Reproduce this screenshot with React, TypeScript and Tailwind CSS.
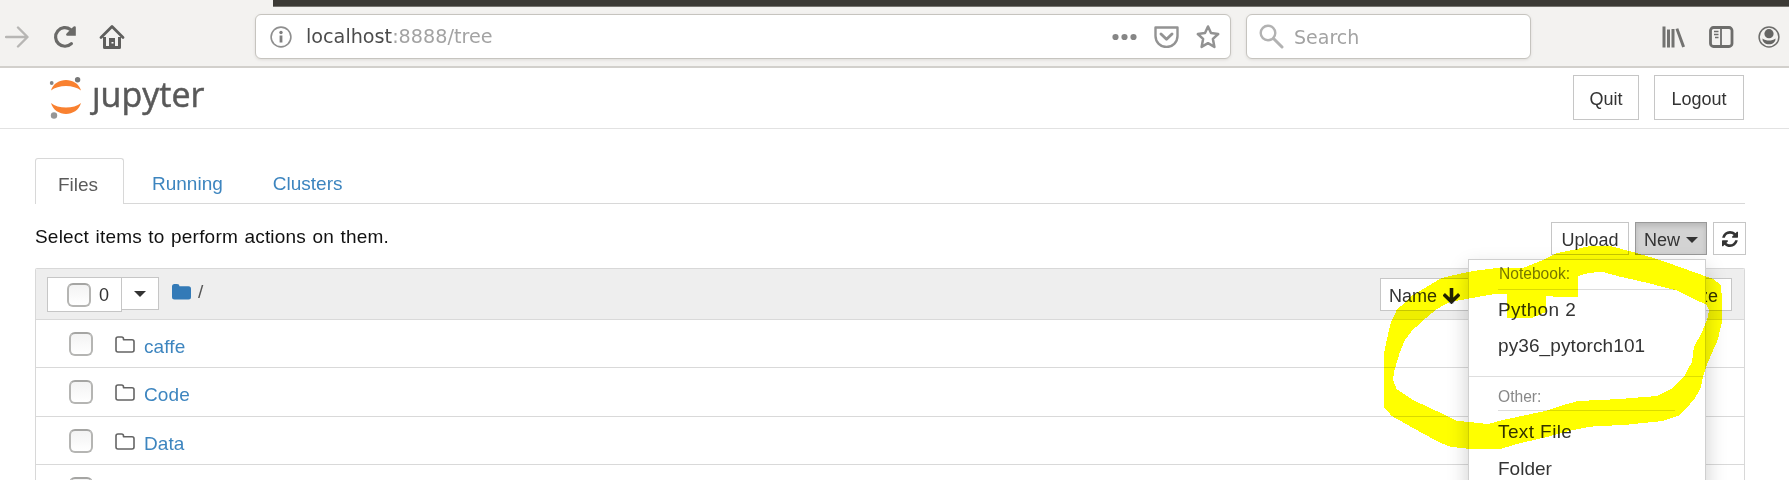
import type { ReactNode } from "react";

const OUTER =
  "M1384 408V353L1386.7 340L1390.7 323L1396.7 310L1413 295L1430 285L1440 279L1446.7 276.7L1473 271L1497 268H1523L1543 260L1557 253L1577 249L1590 246H1610L1633 252L1660 260L1690 270.7L1713 279L1721 285L1722 300V322L1717.7 340L1706.7 365L1702.7 378L1700.7 388L1695 398L1686.7 408L1680 415L1663 421L1626.7 424.7L1590 426.7L1573 430L1546.7 437L1516.7 444L1501.7 448.7H1468L1450 446.7L1438 441.7L1416.7 430L1391.7 416L1385 408Z";
const INNER =
  "M1393 380L1394 371.7L1400 351.7L1405 340L1411.7 331L1421.7 321.7L1436.7 309L1450 302L1466.7 299L1483 296L1495 294H1507V317.5H1533L1546 312V296L1560 297H1578V276L1590 272.7L1603 272L1620 276.7L1646.7 282.7L1676.7 290.5L1706.7 305L1709 310L1708 316.7L1701.7 333L1694 346.7L1692 361.7L1685 375L1673 388L1656.7 396L1620 399L1578 401L1560 406L1546.7 410.7L1503 420L1488 424L1456.7 420.7L1438 411.7L1413 400L1396.7 389Z";

function Checkbox() {
  return (
    <span className="block size-6 shrink-0 rounded-[6px] border-2 border-[#b5b5b3] border-t-[#a5a5a3] bg-gradient-to-b from-[#f3f3f3] to-white" />
  );
}

function Caret() {
  return (
    <svg width="12" height="6" viewBox="0 0 12 6" className="shrink-0">
      <path d="M0 0h12L6 6z" fill="#333" />
    </svg>
  );
}

function Button({ className, children }: { className: string; children: ReactNode }) {
  return (
    <div className={`flex shrink-0 items-center border border-[#c6c6c6] bg-white text-[18px] leading-none text-[#333] ${className}`}>
      {children}
    </div>
  );
}

function Toolbar() {
  return (
    <div className="flex h-[68px] flex-col border-b-2 border-[#d2d0cc] bg-[#f3f2f0]">
      <div className="ml-[273px] h-[7px] shrink-0 border-b border-[#76746f] bg-[#3c3a35]" />
      <div className="flex h-[59px] items-center font-['DejaVu_Sans',sans-serif]">
        <svg width="24" height="24" viewBox="0 0 24 24" className="ml-[5px] shrink-0" fill="none" stroke="#b7b6b4" strokeWidth="2.4" strokeLinecap="round" strokeLinejoin="round">
          <path d="M1 12h21M13 2.500l9.500 9.500-9.500 9.500" />
        </svg>
        <svg width="24" height="24" viewBox="0 0 24 24" className="ml-[24px] shrink-0">
          <path d="M17.500 4.500A9.300 9.300 0 1 0 18.400 18.600" fill="none" stroke="#6a6a68" strokeWidth="3.200" strokeLinecap="round" />
          <path d="M20.300 1.700c1-.9 2.500-.6 2.500.7v8.300H14.400c-1.400 0-1.700-1.400-.8-2.300z" fill="#6a6a68" />
        </svg>
        <svg width="26" height="26" viewBox="0 0 26 26" className="ml-[22px] shrink-0">
          <path d="M2 13.500L13 2.500l11 11" fill="none" stroke="#5f5f5d" strokeWidth="2.800" strokeLinecap="round" strokeLinejoin="round" />
          <path d="M5.500 13v10.500h15V13" fill="none" stroke="#5f5f5d" strokeWidth="3" strokeLinejoin="round" />
          <path d="M10 14h6v10h-6z" fill="#5f5f5d" />
          <path d="M12.500 18h2v1.500h-2z" fill="#fff" />
        </svg>
        <div className="ml-[130px] flex h-[45px] w-[976px] shrink-0 items-center rounded-[6px] border border-[#c6c4bf] bg-white shadow-[0_1px_3px_#dddbd8]">
          <svg width="22" height="22" viewBox="0 0 22 22" className="ml-[14px] shrink-0">
            <circle cx="11" cy="11" r="9.900" fill="none" stroke="#8f8f8f" strokeWidth="1.600" />
            <circle cx="11" cy="6.500" r="1.700" fill="#7f7f7f" />
            <path d="M9.600 9.500h2.800v7H9.600z" fill="#7f7f7f" />
          </svg>
          <div className="ml-[14px] grow whitespace-nowrap text-[19.2px] leading-6 text-[#a3a3a3]">
            <span className="text-[#4c4c4c]">localhost</span>:8888/tree
          </div>
          <svg width="25" height="8" viewBox="0 0 25 8" className="shrink-0" fill="#868686">
            <circle cx="3.500" cy="4" r="3.100" />
            <circle cx="12.500" cy="4" r="3.100" />
            <circle cx="21.500" cy="4" r="3.100" />
          </svg>
          <svg width="25" height="22" viewBox="0 0 25 22" className="ml-[17px] shrink-0" fill="none" stroke="#939393" strokeLinecap="round" strokeLinejoin="round">
            <path d="M1.500 1.500h22v8.500a11 11 0 0 1-22 0z" strokeWidth="2.400" />
            <path d="M7 8l5.500 5.200L18 8" strokeWidth="2.900" />
          </svg>
          <svg width="24" height="25" viewBox="0 0 24 25" className="mr-[10px] ml-[17px] shrink-0" fill="none" stroke="#929292" strokeWidth="2.500" strokeLinejoin="round">
            <path d="M12 2.500l3 6.600 7.200.9-5.300 4.900 1.500 8L12 19.200l-6.400 3.700 1.500-8L1.800 10l7.200-.9z" />
          </svg>
        </div>
        <div className="ml-[15px] flex h-[45px] w-[285px] shrink-0 items-center rounded-[6px] border border-[#c6c4bf] bg-white shadow-[0_1px_3px_#dddbd8]">
          <svg width="25" height="25" viewBox="0 0 25 25" className="ml-3 shrink-0" fill="none" stroke="#b2b2b2" strokeLinecap="round">
            <circle cx="9" cy="9" r="7.300" strokeWidth="2.400" />
            <path d="M14.500 14.500l8.500 8.500" strokeWidth="3" />
          </svg>
          <div className="ml-[10px] text-[19px] leading-6 text-[#a3a3a3]">Search</div>
        </div>
        <svg width="24" height="22" viewBox="0 0 24 22" className="ml-[131px] shrink-0" fill="#737371">
          <path d="M0.500 0.500h3v21h-3zM5 3.500h3v18H5zM9.500 3h3v18.500h-3zM13.500 3l2.800-.8 6.700 18.300-2.800 1z" />
        </svg>
        <svg width="25" height="22" viewBox="0 0 25 22" className="ml-[23px] shrink-0" fill="none" stroke="#6d6d6b">
          <rect x="1.500" y="1.500" width="21.500" height="19" rx="3" strokeWidth="2.800" />
          <path d="M12 1v20" strokeWidth="1.800" />
          <path d="M5 5.500h4.500M5 8.500h4.500M6 11.500h3.500" strokeWidth="1.300" />
        </svg>
        <svg width="22" height="22" viewBox="0 0 22 22" className="ml-6 shrink-0">
          <circle cx="11" cy="11" r="9.900" fill="none" stroke="#6d6d6b" strokeWidth="1.500" />
          <circle cx="11" cy="7.700" r="4.600" fill="#666664" />
          <path d="M4.500 12.500c2 1.500 4 2 6.500 2s4.500-.5 6.500-2c.3 3.500-3 5.800-6.500 5.800s-6.800-2.300-6.500-5.800z" fill="#666664" />
        </svg>
      </div>
    </div>
  );
}

function Header() {
  return (
    <div className="flex h-[61px] items-start border-b border-[#e2e2e2] pr-[45px]">
      <svg width="34" height="44" viewBox="0 0 34 44" className="mt-[8px] ml-[48px] shrink-0">
        <path d="M3 14.500C7 .5 29 .5 33 14.500C26 8.500 10 8.500 3 14.500z" fill="#f98130" />
        <path d="M3 27C7 41.500 29 41.500 33 27C26 33 10 33 3 27z" fill="#f98130" />
        <circle cx="3.700" cy="7" r="1.900" fill="#858585" />
        <circle cx="29.600" cy="3.800" r="2.700" fill="#777" />
        <circle cx="6" cy="39.500" r="3.200" fill="#969696" />
      </svg>
      <div className="mt-[4px] ml-[10px] grow font-['Open_Sans','Noto_Sans',sans-serif] text-[34px] leading-[44px] text-[#595959] [-webkit-text-stroke:0.5px_#595959]">ȷupyter</div>
      <Button className="mt-[7px] h-[45px] w-[66px] justify-center pt-[3px]">Quit</Button>
      <Button className="mt-[7px] ml-[15px] h-[45px] w-[90px] justify-center pt-[3px]">Logout</Button>
    </div>
  );
}

function Tabs() {
  return (
    <div className="mr-[44px] ml-[35px] mt-[29px] flex h-[46px] items-stretch text-[19px] text-[#3d85bf]">
      <div className="flex w-[89px] items-center rounded-t-[3px] border border-b-0 border-[#d8d8d8] pt-[8px] pl-[22px] text-[#5a5a5a]">Files</div>
      <div className="flex grow items-center gap-[50px] border-b border-[#d8d8d8] pt-[8px] pl-[28px]">
        <span>Running</span>
        <span>Clusters</span>
      </div>
    </div>
  );
}

function ActionRow() {
  return (
    <div className="mt-[18px] mr-[43px] ml-[35px] flex h-[46px] items-start">
      <div className="mt-[3px] grow text-[19px] leading-[24px] tracking-[0.2px] text-[#111] [word-spacing:1px]">Select items to perform actions on them.</div>
      <Button className="h-[33px] w-[78px] justify-center pt-[2px]">Upload</Button>
      <Button className="ml-[6px] h-[33px] w-[72px] justify-center gap-[6px] border-[#999]! bg-[#d3d3d3]! pt-[2px] shadow-[inset_0_3px_5px_rgba(0,0,0,0.13)]">
        New <Caret />
      </Button>
      <Button className="ml-[6px] h-[33px] w-[33px] justify-center pt-px">
        <svg width="16" height="16" viewBox="0 0 1536 1536">
          <path fill="#333" d="M1511 928q0 5-1 7-64 268-268 434.500T764 1536q-146 0-282.500-55T238 1324l-129 129q-19 19-45 19t-45-19-19-45V960q0-26 19-45t45-19h448q26 0 45 19t19 45-19 45l-137 137q71 66 161 102t187 36q134 0 250-65t186-179q11-17 53-117 8-23 30-23h192q13 0 22.500 9.500t9.500 22.500zm25-800v448q0 26-19 45t-45 19h-448q-26 0-45-19t-19-45 19-45l138-138Q969 256 768 256q-134 0-250 65T332 500q-11 17-53 117-8 23-30 23H50q-13 0-22.500-9.500T18 608v-7q65-268 270-434.500T768 0q146 0 284 55.500T1297 212l130-129q19-19 45-19t45 19 19 45z" />
        </svg>
      </Button>
    </div>
  );
}

function FileRow({ name, height }: { name: string; height: string }) {
  return (
    <div className={`flex shrink-0 items-start border-b border-[#d9d9d9] pt-[12px] pl-[33px] ${height}`}>
      <Checkbox />
      <svg width="20" height="17" viewBox="0 0 20 17" className="mt-[4px] ml-[22px] shrink-0" fill="none" stroke="#646464" strokeWidth="1.600" strokeLinejoin="round">
        <path d="M1 3Q1 1 3 1H6.500Q8.500 1 8.500 3V3.800H17Q19 3.800 19 5.800V14Q19 16 17 16H3Q1 16 1 14z" />
      </svg>
      <span className="mt-[3px] ml-[9px] text-[19px] leading-[24px] tracking-[0.1px] text-[#3d85bf]">{name}</span>
    </div>
  );
}

function FileTable() {
  return (
    <div className="mr-[44px] ml-[35px] flex h-[240px] flex-col overflow-hidden rounded-t-[2px] border border-b-0 border-[#d8d8d8]">
      <div className="flex h-[51px] shrink-0 items-start border-b border-[#d9d9d9] bg-[#eeeeee] pt-[8px] pr-[12px] pl-[11px]">
        <Button className="h-[35px] w-[75px] pl-[19px]">
          <Checkbox />
          <span className="ml-[8px]">0</span>
        </Button>
        <Button className="-ml-px h-[33px] w-[38px] justify-center">
          <Caret />
        </Button>
        <svg width="19" height="16" viewBox="0 0 19 16" className="mt-[7px] ml-[13px] shrink-0">
          <path d="M0 2.500Q0 0 2.500 0H5Q7.500 0 7.500 2.200H16.500Q19 2.200 19 4.700V13Q19 15.500 16.500 15.500H2.500Q0 15.500 0 13z" fill="#337ab7" />
        </svg>
        <span className="mt-[3px] ml-[7px] grow text-[19px] leading-6 text-[#555]">/</span>
        <Button className="mt-px h-[33px] w-[92px] gap-[6px] pt-[2px] pl-[8px]">
          Name
          <svg width="17" height="16" viewBox="0 0 17 16">
            <path d="M8.500 1.500v12M2 7.500l6.500 6.300 6.500-6.300" fill="none" stroke="#222" strokeWidth="3.600" strokeLinecap="square" />
          </svg>
        </Button>
        <Button className="mt-px ml-[170px] h-[33px] w-[90px] justify-end pt-[2px] pr-[13px]">File size</Button>
      </div>
      <FileRow name="caffe" height="h-[48px]" />
      <FileRow name="Code" height="h-[49px]" />
      <FileRow name="Data" height="h-[48px]" />
      <FileRow name="" height="h-[48px]" />
    </div>
  );
}

function NewMenu() {
  return (
    <div className="absolute top-[259px] left-[1468px] flex h-[260px] w-[238px] flex-col border border-[#cfcfcf] bg-white pt-[8px] text-[19px] leading-[36px] text-[#333] shadow-[0_9px_20px_rgba(0,0,0,0.2)]">
      <div className="mr-[30px] ml-[29px] h-[22px] border-b border-[#dcdcdc] pl-px text-[15.6px] leading-[12px] text-[#777]">Notebook:</div>
      <div className="mt-[2px] pl-[29px] tracking-[0.4px]">Python 2</div>
      <div className="pl-[29px] tracking-[0.1px]">py36_pytorch101</div>
      <div className="mt-[12px] h-px bg-[#dedede]" />
      <div className="mr-[30px] ml-[29px] h-[34px] border-b border-[#dcdcdc] pt-[11px] text-[15.6px] leading-[18px] text-[#888]">Other:</div>
      <div className="mt-[3px] pl-[29px] tracking-[0.4px]">Text File</div>
      <div className="mt-px pl-[29px]">Folder</div>
    </div>
  );
}

export default function App() {
  return (
    <div className="relative isolate h-[480px] w-[1789px] overflow-hidden bg-white font-['Liberation_Sans',sans-serif]">
      <Toolbar />
      <Header />
      <Tabs />
      <ActionRow />
      <FileTable />
      <NewMenu />
      <svg width="1789" height="480" viewBox="0 0 1789 480" className="pointer-events-none absolute inset-0 mix-blend-multiply">
        <path d={OUTER + INNER} fill="#ffff00" fillRule="evenodd" shapeRendering="crispEdges" />
      </svg>
    </div>
  );
}
